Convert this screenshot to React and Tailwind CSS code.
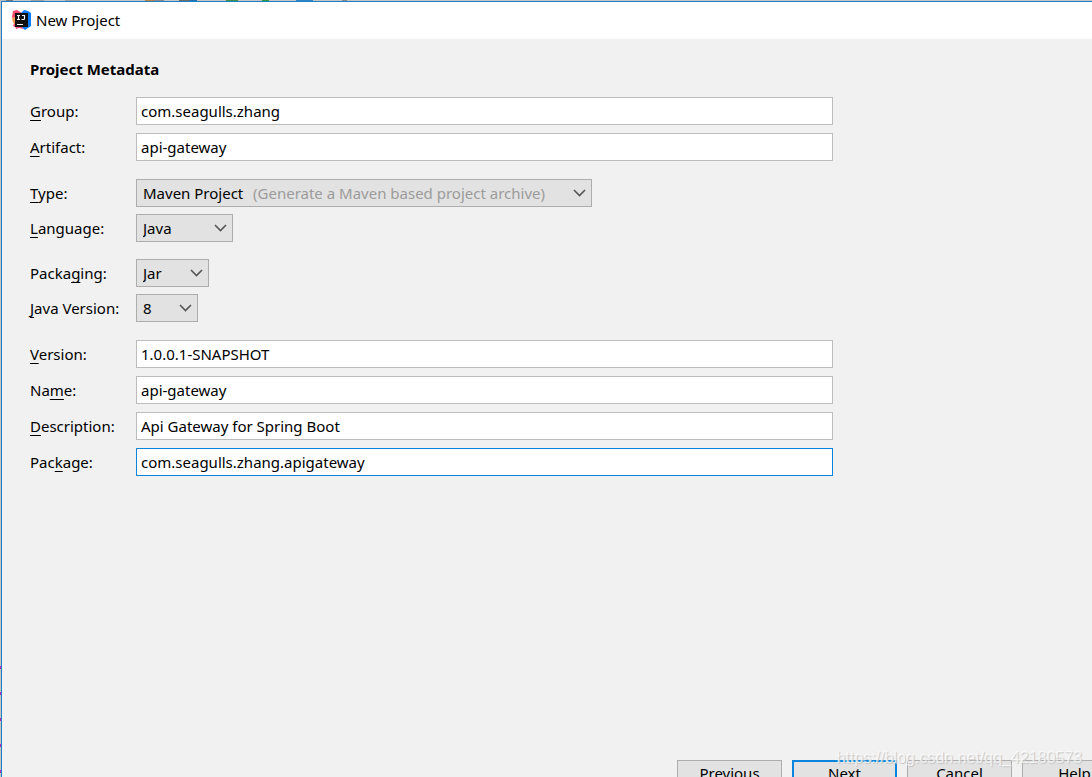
import { useState } from 'react';

const TOP_STRIP = [
  { width: 'w-[6px]', color: 'bg-[#b9b9b9]' },
  { width: 'w-[7px]', color: 'bg-[#777777]' },
  { width: 'w-[18px]', color: 'bg-[#c4c4c4]' },
  { width: 'w-[13px]', color: 'bg-[#a0a0a0]' },
  { width: 'w-[21px]', color: 'bg-[#c4c4c4]' },
  { width: 'w-[15px]', color: 'bg-[#a0a0a0]' },
  { width: 'w-[65px]', color: 'bg-[#c4c4c4]' },
  { width: 'w-[9px]', color: 'bg-[#b8843c]' },
  { width: 'w-[10px]', color: 'bg-[#8a8a8a]' },
  { width: 'w-[15px]', color: 'bg-[#c4c4c4]' },
  { width: 'w-[11px]', color: 'bg-[#6b6b6b]' },
  { width: 'w-[7px]', color: 'bg-[#1f6fb5]' },
  { width: 'w-[29px]', color: 'bg-[#c4c4c4]' },
  { width: 'w-[12px]', color: 'bg-[#3f8f46]' },
  { width: 'w-[24px]', color: 'bg-[#c4c4c4]' },
  { width: 'w-[7px]', color: 'bg-[#2f9b3c]' },
  { width: 'w-[27px]', color: 'bg-[#c4c4c4]' },
  { width: 'w-[17px]', color: 'bg-[#2d86c9]' },
  { width: 'w-[29px]', color: 'bg-[#c4c4c4]' },
  { width: 'w-[5px]', color: 'bg-[#8a8a8a]' },
];

const LEFT_MARKS = [0, 1, 2, 3, 4];

function IdeaLogo() {
  return (
    <svg width="20" height="20" viewBox="0 0 20 20" aria-hidden="true">
      <path d="M1 1 L5 0 L10 3 L8 17 L5 18 L1 16 L3 11 L0 7 Z" fill="#fe4a6e" />
      <path d="M0 8 L3 7 L3 14 L1 13 Z" fill="#f99a52" />
      <path d="M9 3 L12 0 L16 1 L19 3 L19 16 L13 20 L9 17 Z" fill="#087cfa" />
      <path d="M3 15 L9 16 L12 19 L7 18 L4 19 Z" fill="#e6517f" />
      <rect x="3" y="3" width="13" height="14" fill="#111" />
      <path d="M5 5.500h3M6.500 5.500v4M5 9.500h3M10 5.500h2.500v3q0 1 -1 1h-2" fill="none" stroke="#fff" strokeWidth="1.100" />
      <path d="M5 14.500h6" stroke="#fff" strokeWidth="1" />
    </svg>
  );
}

function Chevron() {
  return (
    <svg className="pointer-events-none" width="13" height="8" viewBox="0 0 13 8" aria-hidden="true">
      <path d="M1 1l5.500 5.500L12 1" fill="none" stroke="#555" strokeWidth="1.600" />
    </svg>
  );
}

// Splits a caption so that its access key is underlined
function Caption({ htmlFor, text, mnemonic }) {
  return (
    <label htmlFor={htmlFor} className="w-[106px] shrink-0 whitespace-nowrap">
      {text.slice(0, mnemonic)}
      <span className="underline underline-offset-3 [text-decoration-skip-ink:none]">{text[mnemonic]}</span>
      {text.slice(mnemonic + 1)}
    </label>
  );
}

function TextRow({ id, label, mnemonic, value, onChange, active }) {
  return (
    <div className="flex items-center">
      <Caption htmlFor={id} text={label} mnemonic={mnemonic} />
      <input
        id={id}
        type="text"
        value={value}
        onChange={(event) => onChange(id, event.target.value)}
        className={`h-7 w-full max-w-[697px] border bg-white px-1 outline-none ${
          active ? 'border-[#0a84dc]' : 'border-[#bcbcbc]'
        }`}
      />
    </div>
  );
}

function SelectRow({ id, label, mnemonic, options, hint, width }) {
  return (
    <div className="flex items-center">
      <Caption htmlFor={id} text={label} mnemonic={mnemonic} />
      <div className={`grid h-7 items-center border border-[#adadad] bg-[#e2e2e2] ${width}`}>
        <select
          id={id}
          className="col-start-1 row-start-1 h-full w-full appearance-none bg-transparent pl-[6px] outline-none"
        >
          {options.map((option) => (
            <option key={option}>{option}</option>
          ))}
        </select>
        <div className="pointer-events-none col-start-1 row-start-1 flex items-center justify-end gap-7 pr-[5px]">
          {hint && <span className="whitespace-nowrap text-[#9b9b9b]">{hint}</span>}
          <Chevron />
        </div>
      </div>
    </div>
  );
}

function DialogButton({ children, primary }) {
  return (
    <button
      type="button"
      className={`h-[26px] w-[105px] shrink-0 bg-[#e2e2e2] ${
        primary ? 'border-2 border-[#0a84dc]' : 'border border-[#adadad]'
      }`}
    >
      {children}
    </button>
  );
}

export default function App() {
  const [values, setValues] = useState({
    group: 'com.seagulls.zhang',
    artifact: 'api-gateway',
    version: '1.0.0.1-SNAPSHOT',
    name: 'api-gateway',
    description: 'Api Gateway for Spring Boot',
    package: 'com.seagulls.zhang.apigateway',
  });

  const handleChange = (id, value) => setValues((prev) => ({ ...prev, [id]: value }));

  const textRow = (id, label, mnemonic, active) => (
    <TextRow
      id={id}
      label={label}
      mnemonic={mnemonic}
      value={values[id]}
      onChange={handleChange}
      active={active}
    />
  );

  return (
    <div className="relative flex h-screen flex-col overflow-hidden bg-[#c4c4c4] font-['Noto_Sans','Open_Sans',sans-serif] text-[15px] leading-5 text-black">
      <div className="flex h-px shrink-0">
        {TOP_STRIP.map((part, index) => (
          <div key={index} className={`${part.width} ${part.color}`} />
        ))}
      </div>
      <div className="flex min-h-0 grow">
        <div className="flex w-px shrink-0 flex-col justify-end gap-[23px] pb-1">
          {LEFT_MARKS.map((mark) => (
            <div key={mark} className="h-[3px] bg-[#b02fb5]" />
          ))}
        </div>
        <div className="flex min-w-0 grow flex-col border-t border-l border-[#1f7fc4] bg-[#f1f1f1]">
          <header className="flex h-[37px] shrink-0 items-center gap-1 bg-white pb-px pl-[10px]">
            <IdeaLogo />
            <span>New Project</span>
          </header>

          <main className="flex flex-col gap-[18px] px-7 pt-5">
            <h1 className="font-bold">Project Metadata</h1>
            <section className="flex flex-col gap-2">
              {textRow('group', 'Group:', 0)}
              {textRow('artifact', 'Artifact:', 0)}
            </section>
            <div className="flex flex-col gap-[17px]">
              <section className="flex flex-col gap-[7px]">
                <SelectRow
                  id="type"
                  label="Type:"
                  mnemonic={0}
                  options={['Maven Project']}
                  hint="(Generate a Maven based project archive)"
                  width="w-[456px]"
                />
                <SelectRow id="language" label="Language:" mnemonic={0} options={['Java', 'Kotlin', 'Groovy']} width="w-[97px]" />
              </section>
              <section className="flex flex-col gap-[7px]">
                <SelectRow id="packaging" label="Packaging:" mnemonic={5} options={['Jar', 'War']} width="w-[73px]" />
                <SelectRow id="java-version" label="Java Version:" mnemonic={0} options={['8', '11']} width="w-[62px]" />
              </section>
            </div>
            <section className="flex flex-col gap-2">
              {textRow('version', 'Version:', 0)}
              {textRow('name', 'Name:', 2)}
              {textRow('description', 'Description:', 0)}
              {textRow('package', 'Package:', 3, true)}
            </section>
          </main>

          <footer className="mt-auto -mr-9 flex h-[17px] shrink-0 items-start justify-end gap-[10px] pr-px">
            <DialogButton>Previous</DialogButton>
            <DialogButton primary>Next</DialogButton>
            <DialogButton>Cancel</DialogButton>
            <DialogButton>Help</DialogButton>
          </footer>
        </div>
      </div>
      <span className="pointer-events-none absolute right-[10px] bottom-[7px] font-['Liberation_Sans',sans-serif] text-base text-white/70 [text-shadow:1px_1px_1px_#c4c4c4]">
        https://blog.csdn.net/qq_42180573
      </span>
    </div>
  );
}
